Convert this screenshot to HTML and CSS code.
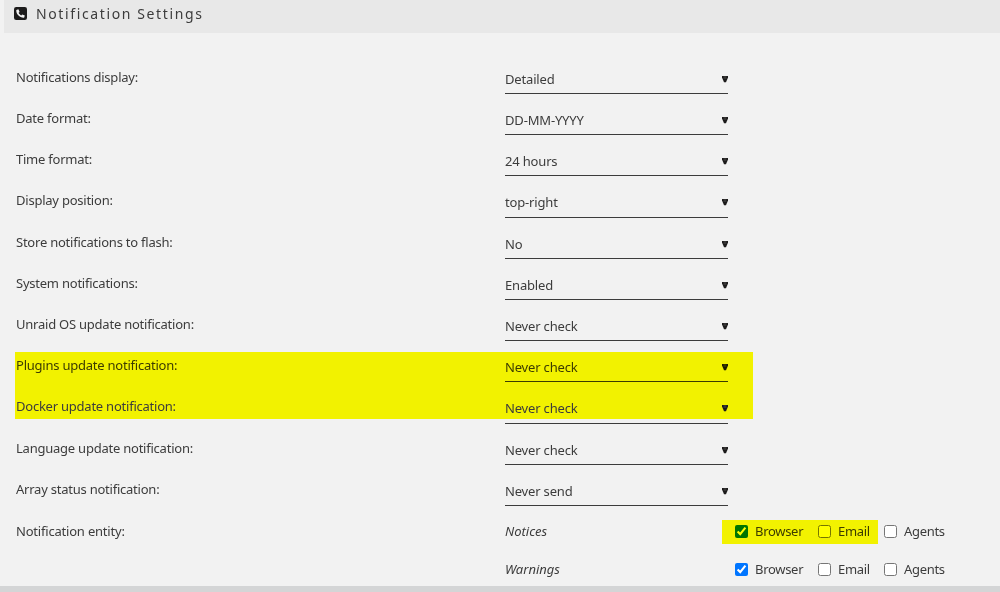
FILE: index.html
```html
<!DOCTYPE html>
<html lang="en">
<head>
    <meta charset="UTF-8">
    <title>Notification Settings</title>
    <link rel="stylesheet" href="styles.css">
</head>
<body>
    <div class="title">
        <svg class="title-icon" viewBox="0 0 13 13">
            <rect width="13" height="13" rx="2.2" fill="#1c1b1b"/>
            <path d="M2.3 3 4.4 2.3 5.6 4.9 4.6 5.8C5.2 7.1 6.1 7.9 7.3 8.4L8.2 7.4 10.8 8.6 10.1 10.7C5.8 11 1.9 7.2 2.3 3Z" fill="#f2f2f2"/>
        </svg>
        <h1>Notification Settings</h1>
    </div>

    <form class="settings">
        <div class="row">
            <label>Notifications display:</label>
            <div class="select"><select><option>Detailed</option><option>Summarized</option></select><svg class="arrow" viewBox="0 0 6 7"><path d="M0 0H6V1.5L4 6.3H2L0 1.5Z"/><path class="shine" d="M2.2 0V3M3.8 0V3"/></svg></div>
        </div>
        <div class="row">
            <label>Date format:</label>
            <div class="select"><select><option>DD-MM-YYYY</option></select><svg class="arrow" viewBox="0 0 6 7"><path d="M0 0H6V1.5L4 6.3H2L0 1.5Z"/><path class="shine" d="M2.2 0V3M3.8 0V3"/></svg></div>
        </div>
        <div class="row">
            <label>Time format:</label>
            <div class="select"><select><option>24 hours</option></select><svg class="arrow" viewBox="0 0 6 7"><path d="M0 0H6V1.5L4 6.3H2L0 1.5Z"/><path class="shine" d="M2.2 0V3M3.8 0V3"/></svg></div>
        </div>
        <div class="row">
            <label>Display position:</label>
            <div class="select"><select><option>top-right</option></select><svg class="arrow" viewBox="0 0 6 7"><path d="M0 0H6V1.5L4 6.3H2L0 1.5Z"/><path class="shine" d="M2.2 0V3M3.8 0V3"/></svg></div>
        </div>
        <div class="row">
            <label>Store notifications to flash:</label>
            <div class="select"><select><option>No</option><option>Yes</option></select><svg class="arrow" viewBox="0 0 6 7"><path d="M0 0H6V1.5L4 6.3H2L0 1.5Z"/><path class="shine" d="M2.2 0V3M3.8 0V3"/></svg></div>
        </div>
        <div class="row">
            <label>System notifications:</label>
            <div class="select"><select><option>Enabled</option><option>Disabled</option></select><svg class="arrow" viewBox="0 0 6 7"><path d="M0 0H6V1.5L4 6.3H2L0 1.5Z"/><path class="shine" d="M2.2 0V3M3.8 0V3"/></svg></div>
        </div>
        <div class="row">
            <label>Unraid OS update notification:</label>
            <div class="select"><select><option>Never check</option></select><svg class="arrow" viewBox="0 0 6 7"><path d="M0 0H6V1.5L4 6.3H2L0 1.5Z"/><path class="shine" d="M2.2 0V3M3.8 0V3"/></svg></div>
        </div>
        <div class="row">
            <label>Plugins update notification:</label>
            <div class="select"><select><option>Never check</option></select><svg class="arrow" viewBox="0 0 6 7"><path d="M0 0H6V1.5L4 6.3H2L0 1.5Z"/><path class="shine" d="M2.2 0V3M3.8 0V3"/></svg></div>
            <span class="marker marker-rows"></span>
        </div>
        <div class="row">
            <label>Docker update notification:</label>
            <div class="select"><select><option>Never check</option></select><svg class="arrow" viewBox="0 0 6 7"><path d="M0 0H6V1.5L4 6.3H2L0 1.5Z"/><path class="shine" d="M2.2 0V3M3.8 0V3"/></svg></div>
        </div>
        <div class="row">
            <label>Language update notification:</label>
            <div class="select"><select><option>Never check</option></select><svg class="arrow" viewBox="0 0 6 7"><path d="M0 0H6V1.5L4 6.3H2L0 1.5Z"/><path class="shine" d="M2.2 0V3M3.8 0V3"/></svg></div>
        </div>
        <div class="row">
            <label>Array status notification:</label>
            <div class="select"><select><option>Never send</option></select><svg class="arrow" viewBox="0 0 6 7"><path d="M0 0H6V1.5L4 6.3H2L0 1.5Z"/><path class="shine" d="M2.2 0V3M3.8 0V3"/></svg></div>
        </div>
        <div class="row entity">
            <span>Notification entity:</span>
            <i>Notices</i>
            <div class="checks">
                <label><input type="checkbox" checked>Browser</label>
                <label><input type="checkbox">Email</label>
                <label><input type="checkbox">Agents</label>
                <span class="marker marker-checks"></span>
            </div>
        </div>
        <div class="row entity">
            <span></span>
            <i>Warnings</i>
            <div class="checks">
                <label><input type="checkbox" checked>Browser</label>
                <label><input type="checkbox">Email</label>
                <label><input type="checkbox">Agents</label>
            </div>
        </div>
    </form>
    <div class="footer"></div>
</body>
</html>
```
FILE: styles.css
```css
* {
    box-sizing: border-box;
}
body {
    margin: 0;
    height: 592px;
    overflow: hidden;
    display: flex;
    flex-direction: column;
    background: #f2f2f2;
    color: #3c3c3c;
    font-family: "Noto Sans", sans-serif;
    font-size: 13px;
}
.title {
    display: flex;
    align-items: center;
    height: 32.5px;
    flex: none;
    margin-left: 4px;
    padding: 0 0 5px 10px;
    background: #e8e8e8;
}
.title-icon {
    width: 13px;
    height: 13px;
    margin-right: 9px;
}
h1 {
    margin: 0;
    font-size: 14px;
    font-weight: normal;
    line-height: 20px;
    letter-spacing: 1.62px;
}
.settings {
    flex: 1;
    padding: 20.1px 0 0 16px;
}
.row {
    position: relative;
    display: grid;
    grid-template-columns: 489px 223px;
    height: 41.24px;
    line-height: 18px;
}
.row > label {
    padding-top: 15px;
    letter-spacing: -.23px;
}
.select {
    position: relative;
    height: 41.24px;
    border-bottom: 1px solid #3c3c3c;
}
select {
    width: 100%;
    height: 18px;
    margin-top: 17px;
    padding: 0;
    border: 0;
    background: none;
    appearance: none;
    color: inherit;
    font: inherit;
    letter-spacing: -.17px;
    display: block;
}
.arrow {
    position: absolute;
    right: 0;
    top: 23px;
    width: 6px;
    height: 7px;
    fill: #1c1b1b;
}
.shine {
    stroke: #777;
    stroke-width: .4;
}
.entity {
    grid-template-columns: 489px 230px 1fr;
    height: 38.5px;
    padding-top: 16px;
}
.entity + .entity {
    padding-top: 15.4px;
}
.entity > span {
    letter-spacing: -.2px;
}
.checks {
    position: relative;
    display: grid;
    grid-template-columns: 83px 66px 70px;
    width: 219px;
    height: 18px;
    letter-spacing: -.3px;
}
.checks label {
    display: flex;
    align-items: center;
}
input[type="checkbox"] {
    width: 13px;
    height: 13px;
    margin: 1px 7px 0 0;
}
/* highlighter strokes */
.marker {
    position: absolute;
    background: #ff0;
    mix-blend-mode: multiply;
    pointer-events: none;
}
.marker-rows {
    left: -1px;
    top: 11px;
    width: 738px;
    height: 67px;
}
.marker-checks {
    left: -13px;
    top: -2px;
    width: 156px;
    height: 24px;
}
.footer {
    flex: none;
    height: 6px;
    background: #d4d5d6;
}
```
